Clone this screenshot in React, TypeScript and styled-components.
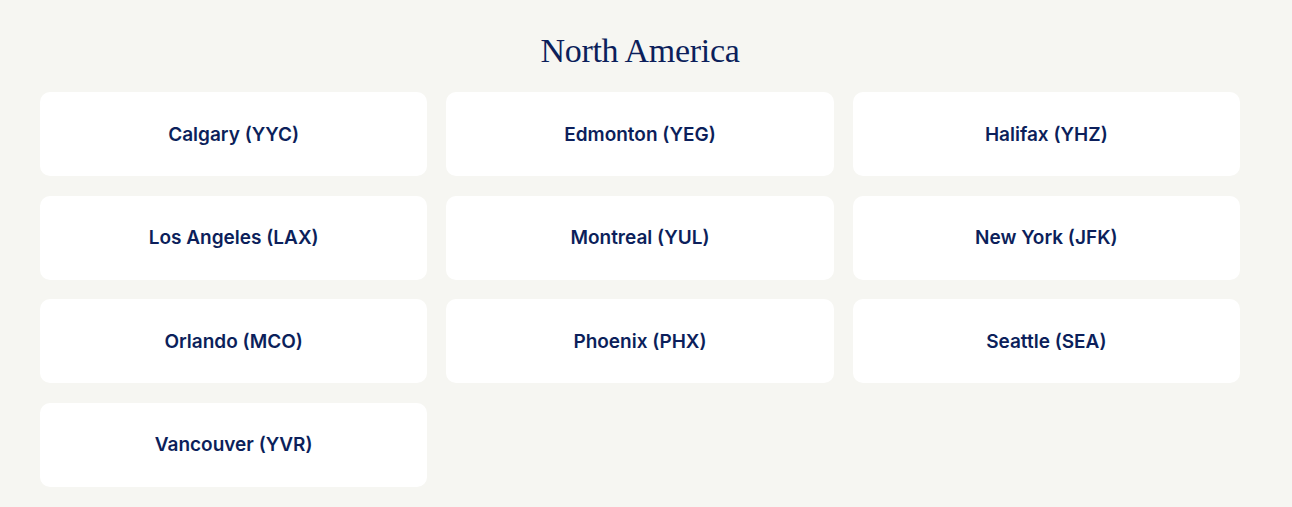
import React from "react";
import styled, { createGlobalStyle } from "styled-components";

const GlobalStyle = createGlobalStyle`
  html, body {
    margin: 0;
    padding: 0;
    background: #f6f6f2;
  }
  * { box-sizing: border-box; }
`;

const Section = styled.section`
  width: 1280px;
  padding: 28px 40px 20px;
  display: flex;
  flex-direction: column;
  align-items: center;
`;

const Heading = styled.h2`
  margin: 0 0 18px;
  font-family: "Liberation Serif", "DejaVu Serif", serif;
  font-weight: 400;
  font-size: 34px;
  line-height: 46px;
  color: #0c1f5b;
  letter-spacing: -0.3px;
`;

const Grid = styled.ul`
  list-style: none;
  margin: 0;
  padding: 0;
  width: 100%;
  display: grid;
  grid-template-columns: repeat(3, 1fr);
  gap: 19.5px 19px;
`;

const Card = styled.li`
  height: 84px;
  background: #ffffff;
  border-radius: 10px;
  display: flex;
  align-items: center;
  justify-content: center;
  font-family: Inter, "Noto Sans", sans-serif;
  font-weight: 600;
  font-size: 19px;
  color: #0c1f5b;
`;

const airports = [
  "Calgary (YYC)",
  "Edmonton (YEG)",
  "Halifax (YHZ)",
  "Los Angeles (LAX)",
  "Montreal (YUL)",
  "New York (JFK)",
  "Orlando (MCO)",
  "Phoenix (PHX)",
  "Seattle (SEA)",
  "Vancouver (YVR)",
];

export default function App() {
  return (
    <>
      <GlobalStyle />
      <Section>
        <Heading>North America</Heading>
        <Grid>
          {airports.map((name) => (
            <Card key={name}>{name}</Card>
          ))}
        </Grid>
      </Section>
    </>
  );
}
